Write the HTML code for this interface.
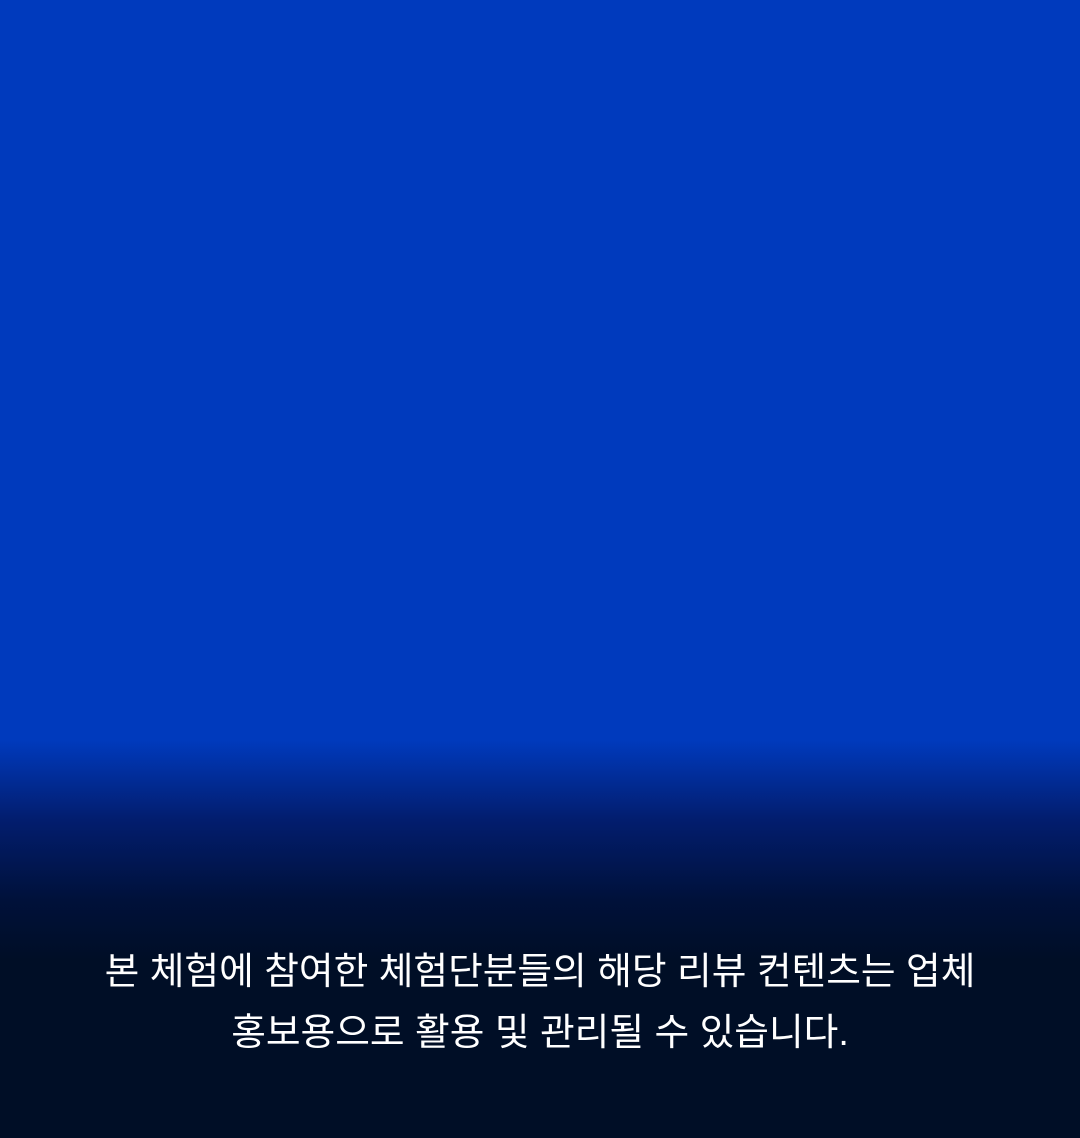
<!DOCTYPE html>
<html><head><meta charset="utf-8"><style>
html,body{margin:0;padding:0}
body{width:1080px;height:1138px;overflow:hidden;background:linear-gradient(to bottom,#003abd 0px,#003abd 740px,#021d6e 820px,#00113a 900px,#000e26 960px,#000e26 1138px);position:relative}
.t{position:absolute;left:0;width:1080px;top:941px;text-align:center;color:#fff;font-family:"Liberation Sans","Noto Sans CJK KR","NanumGothic",sans-serif;font-size:37.7px;line-height:61px;letter-spacing:0}
</style></head><body>
<div class="t">본 체험에 참여한 체험단분들의 해당 리뷰 컨텐츠는 업체<br>홍보용으로 활용 및 관리될 수 있습니다.</div>
</body></html>
